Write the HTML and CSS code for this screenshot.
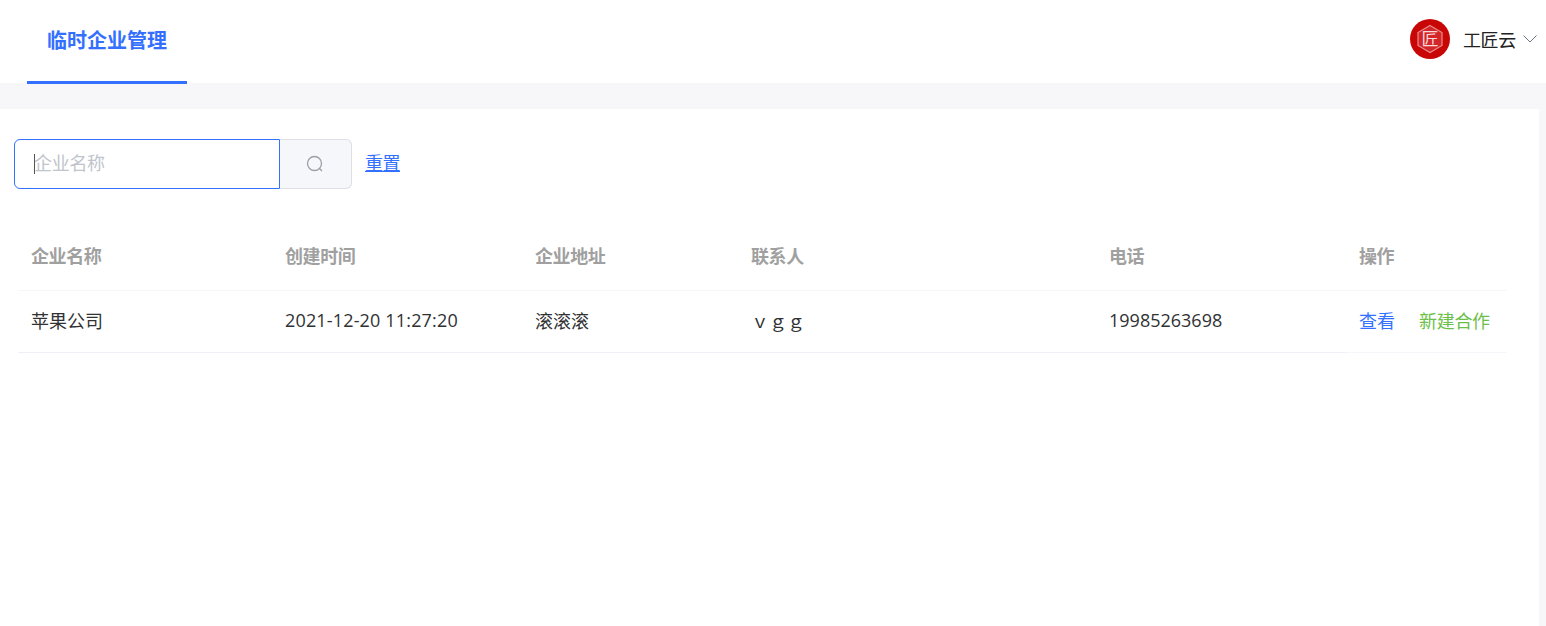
FILE: index.html
```html
<!DOCTYPE html>
<html lang="zh-CN">
<head>
  <meta charset="UTF-8" />
  <title>临时企业管理</title>
  <link rel="stylesheet" href="styles.css">
</head>
<body>
  <header class="topbar">
    <nav class="tabs">
      <a class="tab active">临时企业管理</a>
    </nav>
    <div class="user">
      <svg class="avatar" viewBox="0 0 40 40" width="40" height="40">
        <circle cx="20" cy="20" r="20" fill="#c90606" />
        <path d="M20 6.500 32 13.500v13L20 33.500 8 26.500v-13z" fill="#d3262a" stroke="#e98c8c" stroke-width="1.200" />
        <text x="20" y="26" text-anchor="middle" class="avatar-text">匠</text>
      </svg>
      <span class="user-name">工匠云</span>
      <svg class="chevron" viewBox="0 0 14 8" width="14" height="8">
        <path d="M.5.5 7 7 13.500.5" fill="none" stroke="#6b7684" stroke-width="1" />
      </svg>
    </div>
  </header>

  <main class="content">
    <div class="toolbar">
      <div class="search">
        <div class="search-input">
          <input type="text" placeholder="企业名称" />
          <span class="caret"></span>
        </div>
        <button class="search-btn" type="button">
          <svg viewBox="0 0 18 18" width="18" height="18">
            <circle cx="8.500" cy="8.500" r="7" fill="none" stroke="#9a9ea6" stroke-width="1.300" />
            <path d="M13.500 13.500 16 16" fill="none" stroke="#9a9ea6" stroke-width="1.300" />
          </svg>
        </button>
      </div>
      <a class="link reset">重置</a>
    </div>

    <table class="grid">
      <colgroup>
        <col class="c1"><col class="c2"><col class="c3"><col class="c4"><col class="c5"><col class="c6">
      </colgroup>
      <thead>
        <tr>
          <th>企业名称</th>
          <th>创建时间</th>
          <th>企业地址</th>
          <th>联系人</th>
          <th>电话</th>
          <th>操作</th>
        </tr>
      </thead>
      <tbody>
        <tr>
          <td>苹果公司</td>
          <td class="date">2021-12-20 11:27:20</td>
          <td>滚滚滚</td>
          <td>ｖｇｇ</td>
          <td>19985263698</td>
          <td class="actions"><a class="link">查看</a><a class="link green">新建合作</a></td>
        </tr>
      </tbody>
    </table>
  </main>
</body>
</html>
```

FILE: styles.css
```css
* { box-sizing: border-box; }
html, body {
  margin: 0;
  padding: 0;
  height: 100%;
}
body {
  background: #f7f7f9;
  font-family: "Open Sans", "Noto Sans CJK SC", sans-serif;
  font-size: 18px;
  color: #303133;
  overflow: hidden;
}
.topbar {
  height: 83px;
  background: #fff;
  display: flex;
  justify-content: space-between;
  padding: 0 9px 0 27px;
}
.tabs { display: flex; }
.tab {
  width: 160px;
  height: 84px;
  line-height: 82px;
  text-align: center;
  font-size: 20px;
  font-weight: 700;
  color: #3370ff;
  border-bottom: 3px solid #3370ff;
}
.user {
  display: flex;
  align-items: center;
  padding-bottom: 5px;
}
.avatar { margin-right: 13px; }
.avatar-text {
  font-size: 17px;
  fill: #f8dada;
  font-family: "Noto Sans CJK SC", sans-serif;
}
.user-name {
  color: #222;
  letter-spacing: -0.3px;
  margin-right: 1px;
}
.chevron { margin-left: 6px; }

.content {
  margin: 26px 7px 0 0;
  height: 517px;
  background: #fff;
  padding: 30px 32px 0 18px;
}
.toolbar {
  display: flex;
  align-items: center;
  margin-left: -4px;
  margin-bottom: 39px;
}
.search { display: flex; }
.search-input {
  position: relative;
  width: 266px;
  height: 50px;
}
.search-input input {
  width: 100%;
  height: 100%;
  border: 1px solid #3370ff;
  border-radius: 6px 0 0 6px;
  padding: 0 19px 2px;
  font: inherit;
  letter-spacing: -0.3px;
  outline: none;
}
.search-input input::placeholder { color: #c0c4cc; }
.caret {
  position: absolute;
  left: 20px;
  top: 15px;
  width: 1px;
  height: 20px;
  background: #555;
}
.search-btn {
  width: 72px;
  height: 50px;
  border: 1px solid #dcdfe6;
  border-left: none;
  border-radius: 0 6px 6px 0;
  background: #f5f7fa;
  padding: 3px 2px 0 0;
}
.link {
  color: #3370ff;
  cursor: pointer;
}
.reset {
  margin: 0 0 4px 13px;
  letter-spacing: -0.5px;
  text-decoration: underline;
  text-underline-offset: 1px;
}
.green { color: #6cc04a; }

.grid {
  width: 1489px;
  table-layout: fixed;
  border-collapse: collapse;
}
.c1 { width: 254px; }
.c2 { width: 250px; }
.c3 { width: 216px; }
.c4 { width: 358px; }
.c5 { width: 250px; }
.c6 { width: 161px; }
.grid th, .grid td {
  padding: 0 13px;
  text-align: left;
  white-space: nowrap;
}
.grid th {
  height: 62px;
  padding-bottom: 8px;
  color: #a0a0a0;
  font-weight: 700;
  letter-spacing: -0.4px;
  border-bottom: 1px solid #f5f6f9;
}
.grid td {
  height: 62px;
  padding-bottom: 2px;
  border-bottom: 1px solid #eef0f5;
}
.grid td.date { letter-spacing: 0.16px; }
.grid td.actions { border-bottom-color: #f5f6f9; }
.actions .link + .link {
  margin-left: 24px;
  letter-spacing: -0.3px;
}
```
